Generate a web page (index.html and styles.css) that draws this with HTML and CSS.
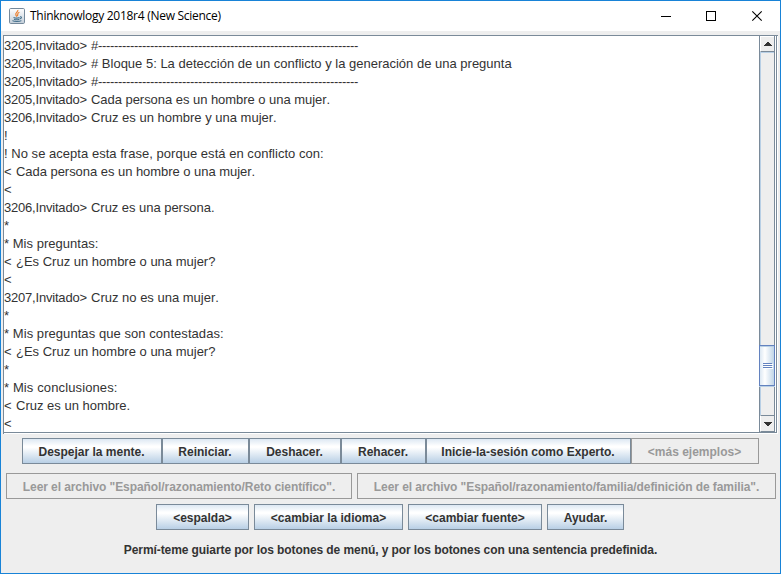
FILE: index.html
```
<!DOCTYPE html>
<html lang="es">
<head>
<meta charset="utf-8">
<title>Thinknowlogy 2018r4 (New Science)</title>
<link rel="stylesheet" href="styles.css">
</head>
<body>
<div class="window">
  <header class="titlebar">
    <svg class="logo" width="16" height="16" viewBox="0 0 16 16">
      <defs><linearGradient id="tile" x2="0" y2="1"><stop stop-color="#fff"/><stop offset="1" stop-color="#c3ced9"/></linearGradient></defs>
      <rect x=".5" y=".5" width="15" height="15" rx="1.2" fill="url(#tile)" stroke="#75899b"/>
      <path d="M8.8 2C9.5 4 5.5 4.7 7 7.4L8 8.6M10.4 4.2C7.5 5.3 9.5 6.2 8.3 8" fill="none" stroke="#ec8030" stroke-width="1.2"/>
      <path d="M4.5 9.4c1.5.7 4.5.7 6 0M11 8.8c2-.4 2 1.7-.4 2.2M5 11.2c1.4.6 4 .6 5.2 0M3.4 12.6c1.8 1.2 7 1.2 9 0" fill="none" stroke="#44708c" stroke-width="1.1"/>
    </svg>
    <h1 class="title">Thinknowlogy 2018r4 (New Science)</h1>
    <svg class="controls" width="104" height="12" viewBox="0 0 104 12" fill="none" stroke="#000">
      <path d="M0 6.5h10M45.5 1.5h9v9h-9z" shape-rendering="crispEdges"/>
      <path d="M91.3 1.3l9.4 9.4M100.7 1.3l-9.4 9.4" stroke-width="1.1"/>
    </svg>
  </header>
  <main class="content">
    <section class="pane">
      <div class="console">
        <p><span class="prompt">3205,Invitado&gt;</span><span class="hash">#</span><span class="dashes">-----------------------------------------------------------------</span></p>
        <p><span class="prompt">3205,Invitado&gt;</span># Bloque 5: La detección de un conflicto y la generación de una pregunta</p>
        <p><span class="prompt">3205,Invitado&gt;</span><span class="hash">#</span><span class="dashes">-----------------------------------------------------------------</span></p>
        <p><span class="prompt">3205,Invitado&gt;</span><span class="snug">Cada persona es un hombre o una mujer.</span></p>
        <p><span class="prompt">3206,Invitado&gt;</span>Cruz es un hombre y una mujer.</p>
        <p>!</p>
        <p class="wide">! No se acepta esta frase, porque está en conflicto con:</p>
        <p><span class="mark">&lt;</span><span class="snug">Cada persona es un hombre o una mujer.</span></p>
        <p>&lt;</p>
        <p><span class="prompt">3206,Invitado&gt;</span><span class="snug">Cruz es una persona.</span></p>
        <p>*</p>
        <p class="wide">* Mis preguntas:</p>
        <p><span class="mark">&lt;</span>¿Es Cruz un hombre o una mujer?</p>
        <p>&lt;</p>
        <p><span class="prompt">3207,Invitado&gt;</span>Cruz no es una mujer.</p>
        <p>*</p>
        <p class="wider">* Mis preguntas que son contestadas:</p>
        <p><span class="mark">&lt;</span>¿Es Cruz un hombre o una mujer?</p>
        <p>*</p>
        <p class="widest">* Mis conclusiones:</p>
        <p><span class="mark">&lt;</span>Cruz es un hombre.</p>
        <p>&lt;</p>
      </div>
      <div class="scrollbar">
        <div class="arrow up"><svg width="8" height="4"><path d="M3 0h2v1h1v1h1v1h1v1H0V3h1V2h1V1h1z" fill="#333"/></svg></div>
        <div class="track"><div class="thumb"><i></i><i></i><i></i></div></div>
        <div class="arrow down"><svg width="8" height="4"><path d="M0 0h8v1H7v1H6v1H5v1H3V3H2V2H1V1H0z" fill="#333"/></svg></div>
      </div>
    </section>
    <div class="row joined">
      <button class="w140">Despejar la mente.</button><button class="w87">Reiniciar.</button><button class="w92">Deshacer.</button><button class="w85">Rehacer.</button><button class="w205">Inicie-la-sesión como Experto.</button><button class="w128" disabled>&lt;más ejemplos&gt;</button>
    </div>
    <div class="row files">
      <button class="w346" disabled>Leer el archivo "Español/razonamiento/Reto científico".</button>
      <button class="w419" disabled>Leer el archivo "Español/razonamiento/familia/definición de familia".</button>
    </div>
    <div class="row">
      <button class="w93">&lt;espalda&gt;</button>
      <button class="w149">&lt;cambiar la idioma&gt;</button>
      <button class="w134">&lt;cambiar fuente&gt;</button>
      <button class="w77">Ayudar.</button>
    </div>
    <p class="hint">Permí-teme guiarte por los botones de menú, y por los botones con una sentencia predefinida.</p>
  </main>
</div>
</body>
</html>
```
FILE: styles.css
```
* { box-sizing: border-box; }
body {
  margin: 0;
  font-family: "Liberation Sans", Arial, sans-serif;
  font-size: 13px;
  color: #333;
}
p, h1 { margin: 0; }
.window {
  width: 781px;
  height: 574px;
  border: 1px solid #1883d7;
  background: #eee;
  overflow: hidden;
}
.titlebar {
  display: flex;
  align-items: center;
  height: 30px;
  padding: 0 15px 0 8px;
  background: #fff;
}
.title {
  flex: 1;
  margin-left: 5px;
  font: 400 12px/18px "Open Sans", "Noto Sans", sans-serif;
  letter-spacing: -0.28px;
  color: #000;
}
.content { padding: 4px 3px 0 2px; }
.pane {
  display: flex;
  width: 775px;
  height: 399px;
  border: 1px solid #7a8a99;
  border-right: 0;
  border-bottom: 0;
  background: #fff;
  box-shadow: inset -1px -1px #fff, inset -2px -2px #7a8a99;
}
.console {
  width: 755px;
  height: 396px;
  padding-top: 1px;
  font-kerning: none;
}
.console p { height: 18px; line-height: 18px; white-space: pre; }
.prompt { display: inline-block; width: 87px; letter-spacing: -0.2px; }
.mark { display: inline-block; width: 12px; }
.hash { display: inline-block; width: 7px; }
.snug { letter-spacing: -0.04px; }
.console .wide { letter-spacing: 0.03px; }
.console .wider { letter-spacing: 0.06px; }
.console .widest { letter-spacing: 0.12px; }
.dashes { letter-spacing: -0.33px; }
.scrollbar {
  display: flex;
  flex-direction: column;
  width: 16px;
  height: 396px;
  border-left: 1px solid #7a8a99;
  border-right: 1px solid #7a8a99;
  background: #eee;
}
.arrow {
  display: flex;
  align-items: center;
  justify-content: center;
  height: 16px;
  border: 1px solid #fff;
  border-right: 0;
}
.arrow.up { border-bottom: 1px solid #7a8a99; }
.arrow.down { height: 17px; border-top: 1px solid #7a8a99; border-bottom: 1px solid #7a8a99; }
.track {
  flex: 1;
  padding-top: 292px;
  border-left: 1px solid #b8cfe5;
  border-top: 1px solid #b8cfe5;
}
.thumb {
  display: flex;
  flex-direction: column;
  justify-content: center;
  align-items: center;
  gap: 1px;
  width: 16px;
  height: 41px;
  margin-left: -2px;
  border: 1px solid #6382bf;
  background: linear-gradient(90deg, #dce8f3, #fff 35%, #c0d5e8);
  box-shadow: inset 0 1px #b8cfe5, 0 1px #b8cfe5;
}
.thumb i { width: 9px; height: 1px; background: #6382bf; box-shadow: 1px 1px #fff; }
.row { display: flex; justify-content: center; gap: 5px; height: 26px; margin-top: 5px; }
.joined { gap: 0; margin-top: 4px; }
.files { margin: 9px -1px 0 1px; }
.files button { letter-spacing: -0.08px; }
button {
  flex: none;
  padding: 2px 0 0;
  border: 1px solid #7a8a99;
  border-radius: 0;
  background: linear-gradient(#dde8f3, #fff 30%, #fff 35%, #b8cfe5);
  color: #333;
  font: 700 12px/22px "Liberation Sans", Arial, sans-serif;
  white-space: nowrap;
}
button:disabled { border-color: #999; background: #eee; color: #999; }
.w140 { width: 140px; }
.w87 { width: 87px; }
.w92 { width: 92px; }
.w85 { width: 85px; }
.w205 { width: 205px; }
.w128 { width: 128px; }
.w346 { width: 346px; }
.w419 { width: 419px; }
.w93 { width: 93px; }
.w149 { width: 149px; }
.w134 { width: 134px; }
.w77 { width: 77px; }
.hint { margin: 11px 0 0 1px; text-align: center; font-size: 12px; font-weight: 700; line-height: 18px; letter-spacing: -0.08px; }
```
